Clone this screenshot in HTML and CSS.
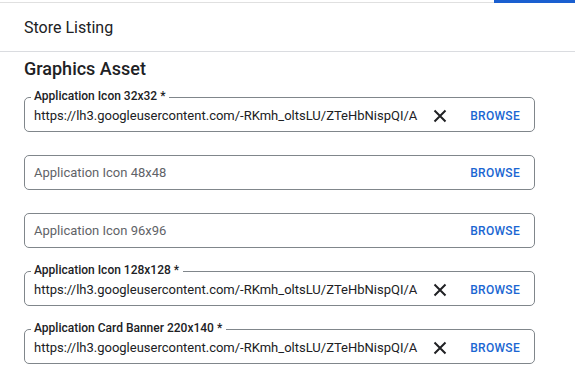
FILE: index.html
```html
<!DOCTYPE html>
<html lang="en">
<head>
    <meta charset="UTF-8">
    <meta name="viewport" content="width=device-width, initial-scale=1.0">
    <title>Store Listing</title>
    <link rel="stylesheet" href="styles.css">
</head>
<body>
    <div class="top-bar">
        <div class="top-line"></div>
        <div class="top-active"></div>
    </div>

    <header class="page-header">
        <h2 class="page-title">Store Listing</h2>
    </header>

    <section class="section">
        <h3 class="section-title">Graphics Asset</h3>

        <div class="field filled">
            <label class="field-label">Application Icon 32x32 *</label>
            <span class="field-value">https://lh3.googleusercontent.com/-RKmh_oltsLU/ZTeHbNispQI/A</span>
            <span class="clear-btn">
                <svg width="14" height="14" viewBox="0 0 14 14"><path d="M1.5 1.5 L12.5 12.5 M12.5 1.5 L1.5 12.5" stroke="#202124" stroke-width="2"/></svg>
            </span>
            <a href="#" class="browse-btn">BROWSE</a>
        </div>

        <div class="field">
            <span class="field-placeholder">Application Icon 48x48</span>
            <a href="#" class="browse-btn">BROWSE</a>
        </div>

        <div class="field">
            <span class="field-placeholder">Application Icon 96x96</span>
            <a href="#" class="browse-btn">BROWSE</a>
        </div>

        <div class="field filled">
            <label class="field-label">Application Icon 128x128 *</label>
            <span class="field-value">https://lh3.googleusercontent.com/-RKmh_oltsLU/ZTeHbNispQI/A</span>
            <span class="clear-btn">
                <svg width="14" height="14" viewBox="0 0 14 14"><path d="M1.5 1.5 L12.5 12.5 M12.5 1.5 L1.5 12.5" stroke="#202124" stroke-width="2"/></svg>
            </span>
            <a href="#" class="browse-btn">BROWSE</a>
        </div>

        <div class="field filled">
            <label class="field-label">Application Card Banner 220x140 *</label>
            <span class="field-value">https://lh3.googleusercontent.com/-RKmh_oltsLU/ZTeHbNispQI/A</span>
            <span class="clear-btn">
                <svg width="14" height="14" viewBox="0 0 14 14"><path d="M1.5 1.5 L12.5 12.5 M12.5 1.5 L1.5 12.5" stroke="#202124" stroke-width="2"/></svg>
            </span>
            <a href="#" class="browse-btn">BROWSE</a>
        </div>
    </section>
</body>
</html>
```

FILE: styles.css
```css
* {
    margin: 0;
    padding: 0;
    box-sizing: border-box;
    font-family: Roboto, "Liberation Sans", Arial, sans-serif;
}
body {
    background-color: white;
    color: #202124;
    width: 575px;
    overflow: hidden;
}
.top-bar {
    display: flex;
    align-items: flex-start;
    height: 3px;
}
.top-line {
    flex: 1;
    height: 1px;
    margin-top: 2px;
    background-color: #e0e0e0;
}
.top-active {
    width: 81px;
    height: 3px;
    background-color: #1a5fd0;
}
.page-header {
    height: 49px;
    border-bottom: 1px solid #dadce0;
    padding: 0 24px;
    display: flex;
    align-items: center;
}
.page-title {
    font-size: 16px;
    font-weight: 400;
    color: #202124;
    margin-top: 1px;
}
.section {
    padding: 5px 40px 0 24px;
}
.section-title {
    font-size: 18px;
    font-weight: 500;
    color: #202124;
    line-height: 24px;
    margin-bottom: 16px;
}
.field {
    position: relative;
    height: 35px;
    border: 1px solid #80868b;
    border-radius: 5px;
    display: flex;
    align-items: center;
    padding: 0 14px 0 9px;
    margin-bottom: 23px;
}
.field-label {
    position: absolute;
    top: -8px;
    left: 6px;
    background-color: white;
    padding: 0 4px 0 3px;
    font-size: 12px;
    font-weight: 500;
    line-height: 13px;
    color: #202124;
}
.field-value {
    flex: 1;
    font-size: 13px;
    color: #202124;
    white-space: nowrap;
    overflow: hidden;
    padding-top: 2px;
}
.field-placeholder {
    flex: 1;
    font-size: 13px;
    color: #5f6368;
}
.clear-btn {
    display: flex;
    align-items: center;
    margin: 2px 23px 0 13px;
}
.browse-btn {
    font-size: 12px;
    font-weight: 500;
    letter-spacing: 0.3px;
    color: #1a66d2;
    text-decoration: none;
}
.filled .browse-btn {
    padding-top: 2px;
}
```
